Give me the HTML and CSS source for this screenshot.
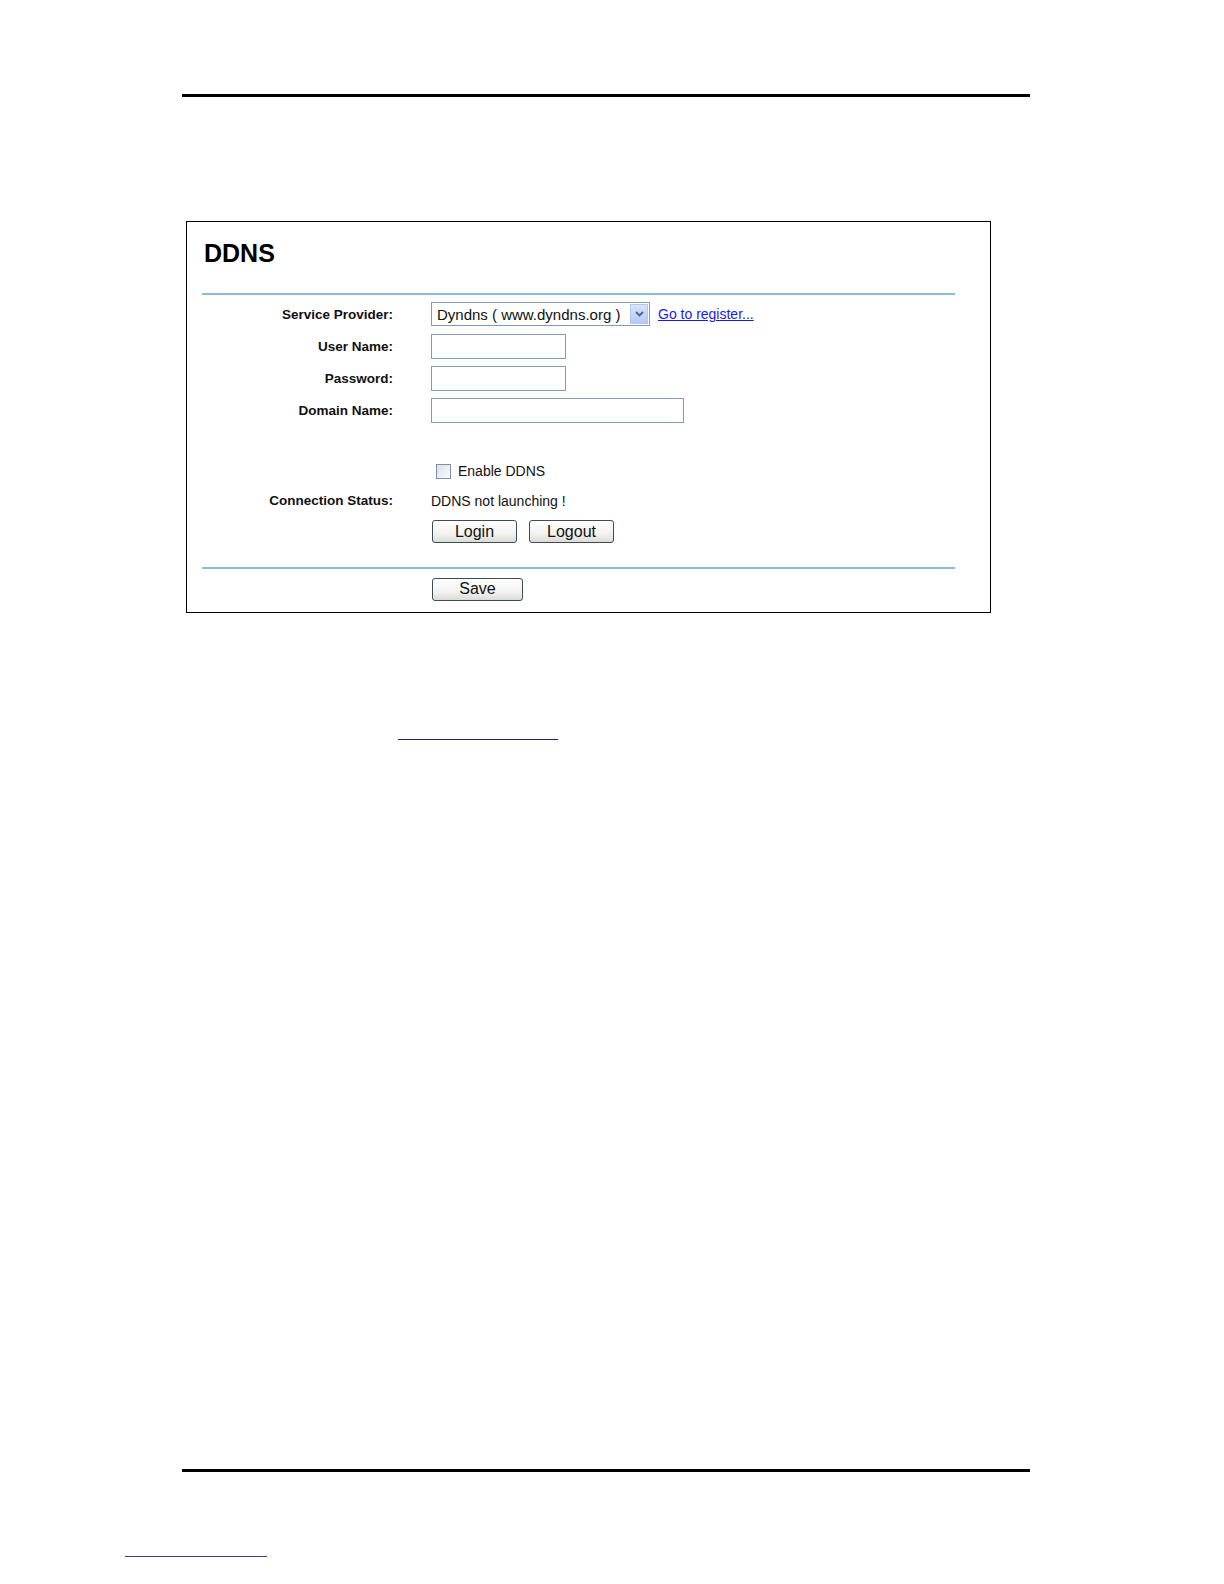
FILE: index.html
```html
<!DOCTYPE html>
<html lang="en">
<head>
<meta charset="utf-8">
<title>DDNS</title>
<link rel="stylesheet" href="styles.css">
</head>
<body>
<div class="doc">
  <div class="rule"></div>

  <div class="panel">
    <h1 class="title">DDNS</h1>
    <div class="sep"></div>

    <div class="form">
      <div class="label">Service Provider:</div>
      <div class="field">
        <div class="select">
          <span class="select-text">Dyndns ( www.dyndns.org )</span>
          <span class="select-btn">
            <svg width="9" height="6" viewBox="0 0 9 6"><path d="M1 1 L4.5 4.5 L8 1" fill="none" stroke="#4d6185" stroke-width="1.8"/></svg>
          </span>
        </div>
        <a class="reg" href="#">Go to register...</a>
      </div>

      <div class="label">User Name:</div>
      <div class="field"><div class="input short"></div></div>

      <div class="label">Password:</div>
      <div class="field"><div class="input short"></div></div>

      <div class="label">Domain Name:</div>
      <div class="field"><div class="input long"></div></div>
    </div>

    <div class="form lower">
      <div class="label"></div>
      <div class="field check-row"><span class="checkbox"></span><span class="text">Enable DDNS</span></div>

      <div class="label">Connection Status:</div>
      <div class="field status"><span class="text">DDNS not launching !</span></div>

      <div class="label"></div>
      <div class="field buttons"><span class="btn">Login</span><span class="btn">Logout</span></div>
    </div>

    <div class="sep sep2"></div>

    <div class="form save-row">
      <div class="label"></div>
      <div class="field"><span class="btn save">Save</span></div>
    </div>
  </div>

  <div class="link-line"></div>

  <div class="rule bottom"></div>

  <div class="foot-line"></div>
</div>
</body>
</html>
```

FILE: styles.css
```css
* { box-sizing: border-box; }

body {
  margin: 0;
  background: #fff;
  font-family: "Liberation Sans", Arial, sans-serif;
  color: #000;
}

.doc {
  padding-top: 94px;
  width: 1224px;
}

.rule {
  margin-left: 182px;
  width: 848px;
  height: 3px;
  background: #000;
}

.panel {
  margin: 124px 0 0 186px;
  width: 805px;
  height: 392px;
  border: 1px solid #000;
  display: flex;
  flex-direction: column;
}

.title {
  margin: 16px 0 0 17px;
  font-size: 25px;
  line-height: 30px;
  font-weight: bold;
  letter-spacing: 0;
}

.sep {
  margin: 25px 0 0 15px;
  width: 753px;
  height: 2px;
  background: #86bcdc;
}

.sep2 {
  margin-top: 19px;
}

.form {
  display: grid;
  grid-template-columns: 206px 1fr;
  column-gap: 38px;
  grid-auto-rows: 32px;
  margin-top: 3px;
}

.label {
  display: flex;
  align-items: center;
  justify-content: flex-end;
  font-size: 13.5px;
  font-weight: bold;
  color: #111;
}

.field {
  display: flex;
  align-items: center;
}

.select {
  width: 219px;
  height: 24px;
  border: 1px solid #7f9db9;
  display: flex;
  align-items: center;
  justify-content: space-between;
  padding: 1px 1px 1px 5px;
}

.select-text {
  font-size: 15px;
  color: #111;
}

.select-btn {
  width: 18px;
  height: 20px;
  background: linear-gradient(#d6e2fd, #b6c9f5);
  border: 1px solid #b3c6ef;
  display: flex;
  align-items: center;
  justify-content: center;
}

.reg {
  margin-left: 8px;
  font-size: 14px;
  color: #1a1aee;
  text-decoration: underline;
}

.input {
  height: 25px;
  border: 1px solid #7f9db9;
  background: #fff;
}

.input.short { width: 135px; }
.input.long { width: 253px; }

.lower {
  margin-top: 30px;
  grid-template-rows: 30px 29px 33px;
  grid-auto-rows: auto;
}

.text {
  font-size: 14px;
  color: #111;
}

.check-row {
  padding-left: 5px;
}

.checkbox {
  width: 15px;
  height: 15px;
  border: 1px solid #7d8ea6;
  background: linear-gradient(135deg, #dcdfe4, #fafbfc);
  margin-right: 7px;
}

.buttons {
  gap: 12px;
}

.btn {
  display: inline-flex;
  align-items: center;
  justify-content: center;
  width: 85px;
  height: 23px;
  margin-left: 1px;
  border: 1px solid #3c4a5e;
  border-radius: 3px;
  background: linear-gradient(#ffffff, #f2f2f0 60%, #dcdcd6);
  font-size: 16px;
  color: #111;
}

.buttons .btn + .btn { margin-left: 0; }

.btn.save {
  width: 91px;
  height: 23px;
}

.save-row {
  margin-top: 8px;
  grid-auto-rows: 24px;
}

.link-line {
  margin: 126px 0 0 398px;
  width: 160px;
  height: 1px;
  background: #20207a;
}

.rule.bottom {
  margin-top: 729px;
}

.foot-line {
  margin: 84px 0 0 125px;
  width: 142px;
  height: 1px;
  background: #3a3aa0;
}
```
